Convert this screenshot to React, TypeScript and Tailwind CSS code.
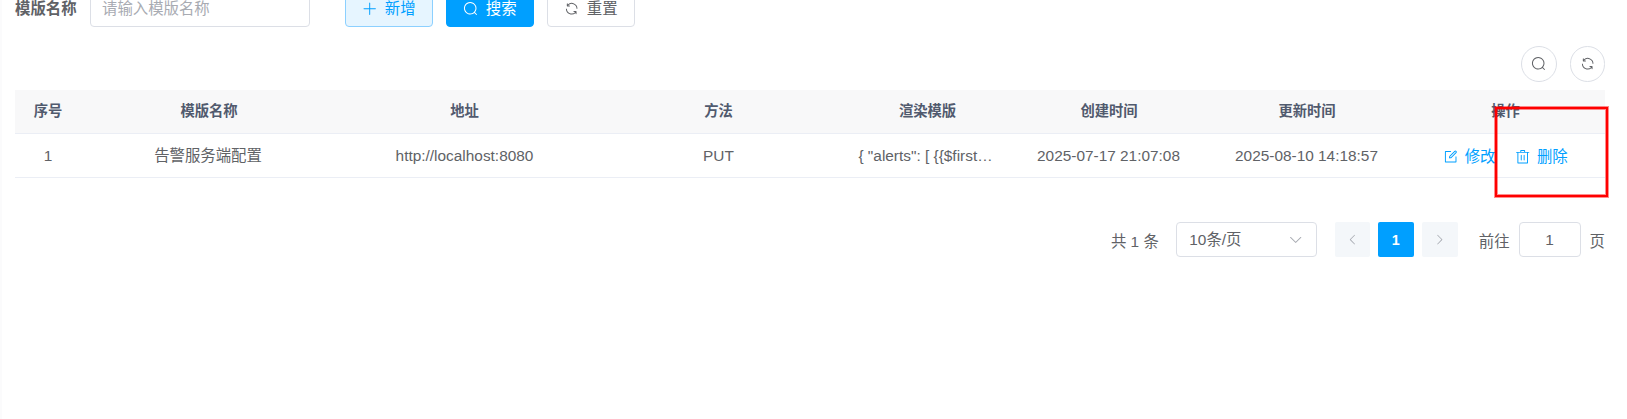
import React from "react";

const paths = {
  search:
    "m795.904 750.72 124.992 124.928a32 32 0 0 1-45.248 45.248L750.656 795.904a416 416 0 1 1 45.248-45.248zM480 832a352 352 0 1 0 0-704 352 352 0 0 0 0 704z",
  refresh:
    "M771.776 794.88A384 384 0 0 1 128 512h64a320 320 0 0 0 555.712 216.448H654.72a32 32 0 1 1 0-64h149.056a32 32 0 0 1 32 32v148.928a32 32 0 1 1-64 0v-50.56zM276.288 295.616h92.992a32 32 0 0 1 0 64H220.16a32 32 0 0 1-32-32V178.56a32 32 0 0 1 64 0v50.56A384 384 0 0 1 896.128 512h-64a320 320 0 0 0-555.776-216.384z",
  plus: "M480 480V128a32 32 0 0 1 64 0v352h352a32 32 0 1 1 0 64H544v352a32 32 0 1 1-64 0V544H128a32 32 0 0 1 0-64h352z",
  edit: "M832 512a32 32 0 1 1 64 0v352a32 32 0 0 1-32 32H160a32 32 0 0 1-32-32V160a32 32 0 0 1 32-32h352a32 32 0 0 1 0 64H192v640h640V512z m-362.048 42.496 52.8-7.552L847.104 222.4a32 32 0 1 0-45.248-45.248L477.44 501.44l-7.552 52.8zm422.4-422.4a96 96 0 0 1 0 135.808l-331.84 331.84a32 32 0 0 1-18.112 9.088L436.8 623.68a32 32 0 0 1-36.224-36.224l15.104-105.6a32 32 0 0 1 9.024-18.112l331.904-331.84a96 96 0 0 1 135.744 0z",
  trash:
    "M160 256H96a32 32 0 0 1 0-64h256V95.936a32 32 0 0 1 32-32h256a32 32 0 0 1 32 32V192h256a32 32 0 1 1 0 64h-64v672a32 32 0 0 1-32 32H192a32 32 0 0 1-32-32V256zm448-64v-64H416v64h192zM224 896h576V256H224v640zm192-128a32 32 0 0 1-32-32V416a32 32 0 0 1 64 0v320a32 32 0 0 1-32 32zm192 0a32 32 0 0 1-32-32V416a32 32 0 0 1 64 0v320a32 32 0 0 1-32 32z",
  down: "M831.872 340.864 512 652.672 192.128 340.864a30.592 30.592 0 0 0-42.752 0 29.12 29.12 0 0 0 0 41.6L489.664 714.24a32 32 0 0 0 44.672 0l340.288-331.712a29.12 29.12 0 0 0 0-41.728 30.592 30.592 0 0 0-42.752 0z",
};

function Icon({ name, className = "size-[15.4px]" }: { name: keyof typeof paths; className?: string }) {
  return (
    <svg viewBox="0 0 1024 1024" fill="currentColor" className={`shrink-0 ${className}`}>
      <path d={paths[name]} />
    </svg>
  );
}

const columns = [
  { title: "序号", value: "1", cell: "" },
  { title: "模版名称", value: "告警服务端配置", cell: "pr-[2px]" },
  { title: "地址", value: "http://localhost:8080", cell: "" },
  { title: "方法", value: "PUT", cell: "" },
  { title: "渲染模版", value: '{ "alerts": [ {{$first…', cell: "pr-[4px]" },
  { title: "创建时间", value: "2025-07-17 21:07:08", cell: "pr-px" },
  { title: "更新时间", value: "2025-08-10 14:18:57", cell: "pr-px" },
];

const rowGrid = "grid grid-cols-[66px_256px_255px_253px_165px_198px_198px_199px] items-center text-center border-b border-[#ebeef5]";
const button = "flex h-[35px] w-[88px] items-center justify-center gap-[7px] rounded-[4px] border pb-[2px]";

export default function App() {
  return (
    <div className="relative h-[419px] w-full overflow-hidden border-l-2 border-[#fbfbfc] bg-white pr-[22px] pl-[13px] font-['Liberation_Sans','Noto_Sans_CJK_SC',sans-serif] text-[15.4px] leading-[22px] whitespace-nowrap text-[#606266]">
      <form className="-mt-2 flex h-[35px] items-center">
        <label className="w-[75px] pb-[2px] font-bold">模版名称</label>
        <div className="flex h-[35px] w-[220px] items-center rounded-[4px] border border-[#dcdfe6] px-[11px] pb-[2px] text-[#a8abb2]">
          请输入模版名称
        </div>
        <div className="ml-[35px] flex gap-[13px]">
          <button type="button" className={`${button} border-[#8cd0ff] bg-[#e6f5ff] text-[#009fff]`}>
            <Icon name="plus" />
            新增
          </button>
          <button type="button" className={`${button} border-[#009fff] bg-[#009fff] text-white`}>
            <Icon name="search" />
            搜索
          </button>
          <button type="button" className={`${button} border-[#dcdfe6] bg-white`}>
            <Icon name="refresh" />
            重置
          </button>
        </div>
      </form>

      <div className="mt-[19px] flex justify-end gap-[13px]">
        <button className="flex size-9 items-center justify-center rounded-full border border-[#dcdfe6]">
          <Icon name="search" />
        </button>
        <button className="flex h-9 w-[35px] items-center justify-center rounded-full border border-[#dcdfe6]">
          <Icon name="refresh" />
        </button>
      </div>

      <section className="mt-2 w-[1590px]">
        <div className={`${rowGrid} h-11 bg-[#f8f8f9] pb-[2px] text-[14.3px] font-bold text-[#515a6e]`}>
          {columns.map((c) => (
            <div key={c.title}>{c.title}</div>
          ))}
          <div>操作</div>
        </div>
        <div className={`${rowGrid} h-11`}>
          {columns.map((c) => (
            <div key={c.title} className={c.cell}>
              {c.value}
            </div>
          ))}
          <div className="flex items-center justify-center gap-[19px] pt-[2px] text-[#009fff]">
            <span className="flex items-center gap-[6px]">
              <Icon name="edit" />
              修改
            </span>
            <span className="flex items-center gap-[7px]">
              <Icon name="trash" />
              删除
            </span>
          </div>
        </div>
      </section>

      <div className="mt-11 flex h-[35px] items-center justify-end">
        <span className="mr-[17px] pt-[4px]">共 1 条</span>
        <div className="mr-[18px] flex h-[35px] w-[141px] items-center justify-between rounded-[4px] border border-[#dcdfe6] pr-3 pl-[12.5px]">
          10条/页
          <Icon name="down" className="size-[15.4px] text-[#a8abb2]" />
        </div>
        <div className="mr-[21px] flex gap-2">
          <button className="flex h-[35px] w-[35px] items-center justify-center rounded-[2px] bg-[#f4f7fa] text-[#a8abb2]">
            <Icon name="down" className="size-[13.2px] rotate-90" />
          </button>
          <button className="flex h-[35px] w-9 items-center justify-center rounded-[2px] bg-[#009fff] text-[14.3px] font-bold text-white">
            1
          </button>
          <button className="flex h-[35px] w-9 items-center justify-center rounded-[2px] bg-[#f4f7fa] text-[#a8abb2]">
            <Icon name="down" className="size-[13.2px] -rotate-90" />
          </button>
        </div>
        <span className="pt-[4px]">前往</span>
        <div className="mx-[9px] flex h-[35px] w-[62px] items-center justify-center rounded-[4px] border border-[#dcdfe6]">
          1
        </div>
        <span className="pt-[4px]">页</span>
      </div>

      <div className="absolute top-[107px] left-[1493px] h-[90px] w-[113px] border-2 border-[#ff0000] shadow-[0_0_0_1px_rgba(255,0,0,0.45),inset_0_0_0_1px_rgba(255,0,0,0.45)]" />
    </div>
  );
}
